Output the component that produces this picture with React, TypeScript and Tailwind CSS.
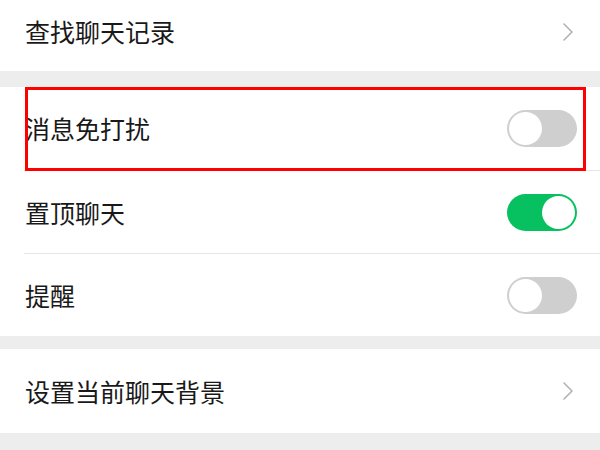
import React from "react";

function Chevron() {
  return (
    <svg width="12" height="20" viewBox="0 0 12 20" className="shrink-0">
      <path d="M2 2 L10 10 L2 18" fill="none" stroke="#b2b2b2" strokeWidth="1.6" strokeLinecap="round" strokeLinejoin="round" />
    </svg>
  );
}

function Toggle({ on }: { on: boolean }) {
  if (on) {
    return (
      <div className="w-[70px] h-[37px] rounded-full bg-[#07c160] flex items-center justify-end p-[2px]">
        <div className="w-[33px] h-[33px] rounded-full bg-white" />
      </div>
    );
  }
  return (
    <div className="w-[70px] h-[37px] rounded-full bg-[#cfcfcf] flex items-center justify-start p-[2px]">
      <div className="w-[33px] h-[33px] rounded-full bg-white" />
    </div>
  );
}

function Row({ label, right, h }: { label: string; right: React.ReactNode; h: string }) {
  return (
    <div className={`flex items-center justify-between pl-[25px] pr-[23px] ${h} bg-white`}>
      <span className="text-[25px] text-[#191919] leading-none">{label}</span>
      {right}
    </div>
  );
}

export default function App() {
  return (
    <div
      className="relative w-[600px] h-[450px] bg-[#ededed] overflow-hidden"
      style={{ fontFamily: '"Noto Sans CJK SC", "Noto Sans", sans-serif' }}
    >
      <div className="flex items-center justify-between pl-[25px] pr-[26px] h-[71px] bg-white pb-[8px]">
        <span className="text-[25px] text-[#191919] leading-none">查找聊天记录</span>
        <Chevron />
      </div>
      <div className="h-[16px]" />
      <div className="bg-white">
        <Row label="消息免打扰" right={<Toggle on={false} />} h="h-[83px]" />
        <div className="ml-[24px] h-px bg-[#e6e6e6]" />
        <Row label="置顶聊天" right={<Toggle on={true} />} h="h-[82px]" />
        <div className="ml-[24px] h-px bg-[#e6e6e6]" />
        <Row label="提醒" right={<Toggle on={false} />} h="h-[82px]" />
      </div>
      <div className="h-[13px]" />
      <div className="flex items-center justify-between pl-[25px] pr-[26px] h-[84px] bg-white">
        <span className="text-[25px] text-[#191919] leading-none">设置当前聊天背景</span>
        <Chevron />
      </div>
      <div className="absolute left-[25px] top-[87px] w-[561px] h-[84px] border-[3px] border-[#ff0000]" />
    </div>
  );
}
